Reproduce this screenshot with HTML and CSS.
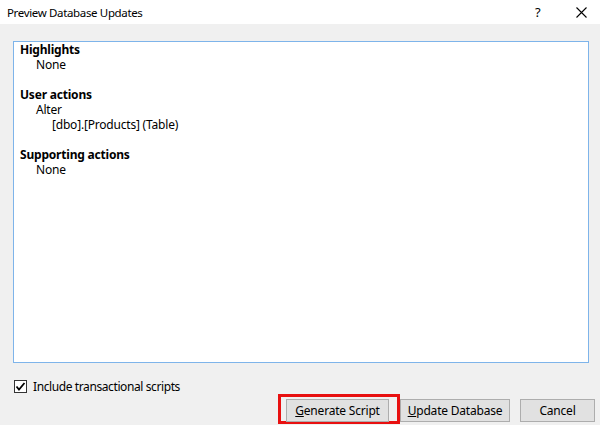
FILE: index.html
```html
<!DOCTYPE html>
<html>
<head>
<meta charset="utf-8">
<link rel="stylesheet" href="styles.css">
</head>
<body>
<div class="dialog">
  <div class="titlebar">
    <span class="title">Preview Database Updates</span>
    <span class="help">?</span>
    <span class="close">
      <svg width="11" height="11" viewBox="0 0 11 11"><path d="M0.5 0.5 L10.5 10.5 M10.5 0.5 L0.5 10.5" stroke="#000" stroke-width="1.1" fill="none"/></svg>
    </span>
  </div>
  <div class="panel">
    <div class="line bold">Highlights</div>
    <div class="line ind1">None</div>
    <div class="line blank"></div>
    <div class="line bold">User actions</div>
    <div class="line ind1">Alter</div>
    <div class="line ind2">[dbo].[Products] (Table)</div>
    <div class="line blank"></div>
    <div class="line bold">Supporting actions</div>
    <div class="line ind1">None</div>
  </div>
  <div class="checkrow">
    <span class="checkbox">
      <svg width="11" height="11" viewBox="0 0 11 11"><path d="M1.5 5.5 L4 8.5 L9.5 2" stroke="#000" stroke-width="1.8" fill="none"/></svg>
    </span>
    <span class="checklabel">Include transactional scripts</span>
  </div>
  <div class="buttons">
    <div class="focusring"><button class="btn btn-gen"><u>G</u>enerate Script</button></div>
    <button class="btn btn-upd"><u>U</u>pdate Database</button>
    <button class="btn btn-cancel">Cancel</button>
  </div>
</div>
</body>
</html>
```
FILE: styles.css
```css
html, body {
  margin: 0;
  padding: 0;
}
body {
  width: 600px;
  height: 425px;
  background: #f0f0f0;
  font-family: "Noto Sans", "Open Sans", sans-serif;
  font-size: 12px;
  color: #000;
  overflow: hidden;
}
.dialog {
  display: flex;
  flex-direction: column;
  height: 425px;
}
.titlebar {
  height: 24px;
  background: #fff;
  display: flex;
  align-items: center;
  padding-left: 7px;
  box-sizing: border-box;
}
.title {
  flex: 1;
  font-size: 11.5px;
  letter-spacing: -0.35px;
}
.help {
  width: 12px;
  font-size: 13px;
  margin-right: 29px;
}
.close {
  width: 11px;
  height: 11px;
  margin-right: 13px;
  display: flex;
}
.panel {
  margin: 17px 0 0 13px;
  width: 576px;
  height: 322px;
  box-sizing: border-box;
  border: 1px solid #7eb4ea;
  background: #fff;
  padding: 0 0 0 6px;
}
.line {
  height: 15px;
  line-height: 15px;
  white-space: nowrap;
  letter-spacing: -0.2px;
}
.bold {
  font-weight: bold;
}
.ind1 { padding-left: 16px; }
.ind2 { padding-left: 32px; }
.checkrow {
  display: flex;
  align-items: center;
  margin: 17px 0 0 14px;
  height: 13px;
}
.checkbox {
  width: 13px;
  height: 13px;
  box-sizing: border-box;
  border: 1px solid #333;
  background: #fff;
  display: flex;
  align-items: center;
  justify-content: center;
}
.checklabel {
  margin-left: 6px;
  letter-spacing: -0.4px;
}
.buttons {
  display: flex;
  align-items: flex-start;
  margin: 1px 0 0 278px;
  height: 31px;
}
.focusring {
  width: 122px;
  height: 30px;
  box-sizing: border-box;
  border: 3px solid #e81010;
  padding: 2px 0 0 5px;
}
.btn {
  font-family: "Noto Sans", "Open Sans", sans-serif;
  font-size: 12px;
  letter-spacing: -0.2px;
  height: 23px;
  box-sizing: border-box;
  border: 1px solid #adadad;
  background: #e1e1e1;
  color: #000;
  padding: 0;
  margin: 0;
  display: flex;
  align-items: center;
  justify-content: center;
}
.btn-gen {
  width: 103px;
}
.btn-upd {
  width: 110px;
  margin: 5px 0 0 0;
}
.btn-cancel {
  width: 75px;
  margin: 5px 0 0 10px;
}
```
